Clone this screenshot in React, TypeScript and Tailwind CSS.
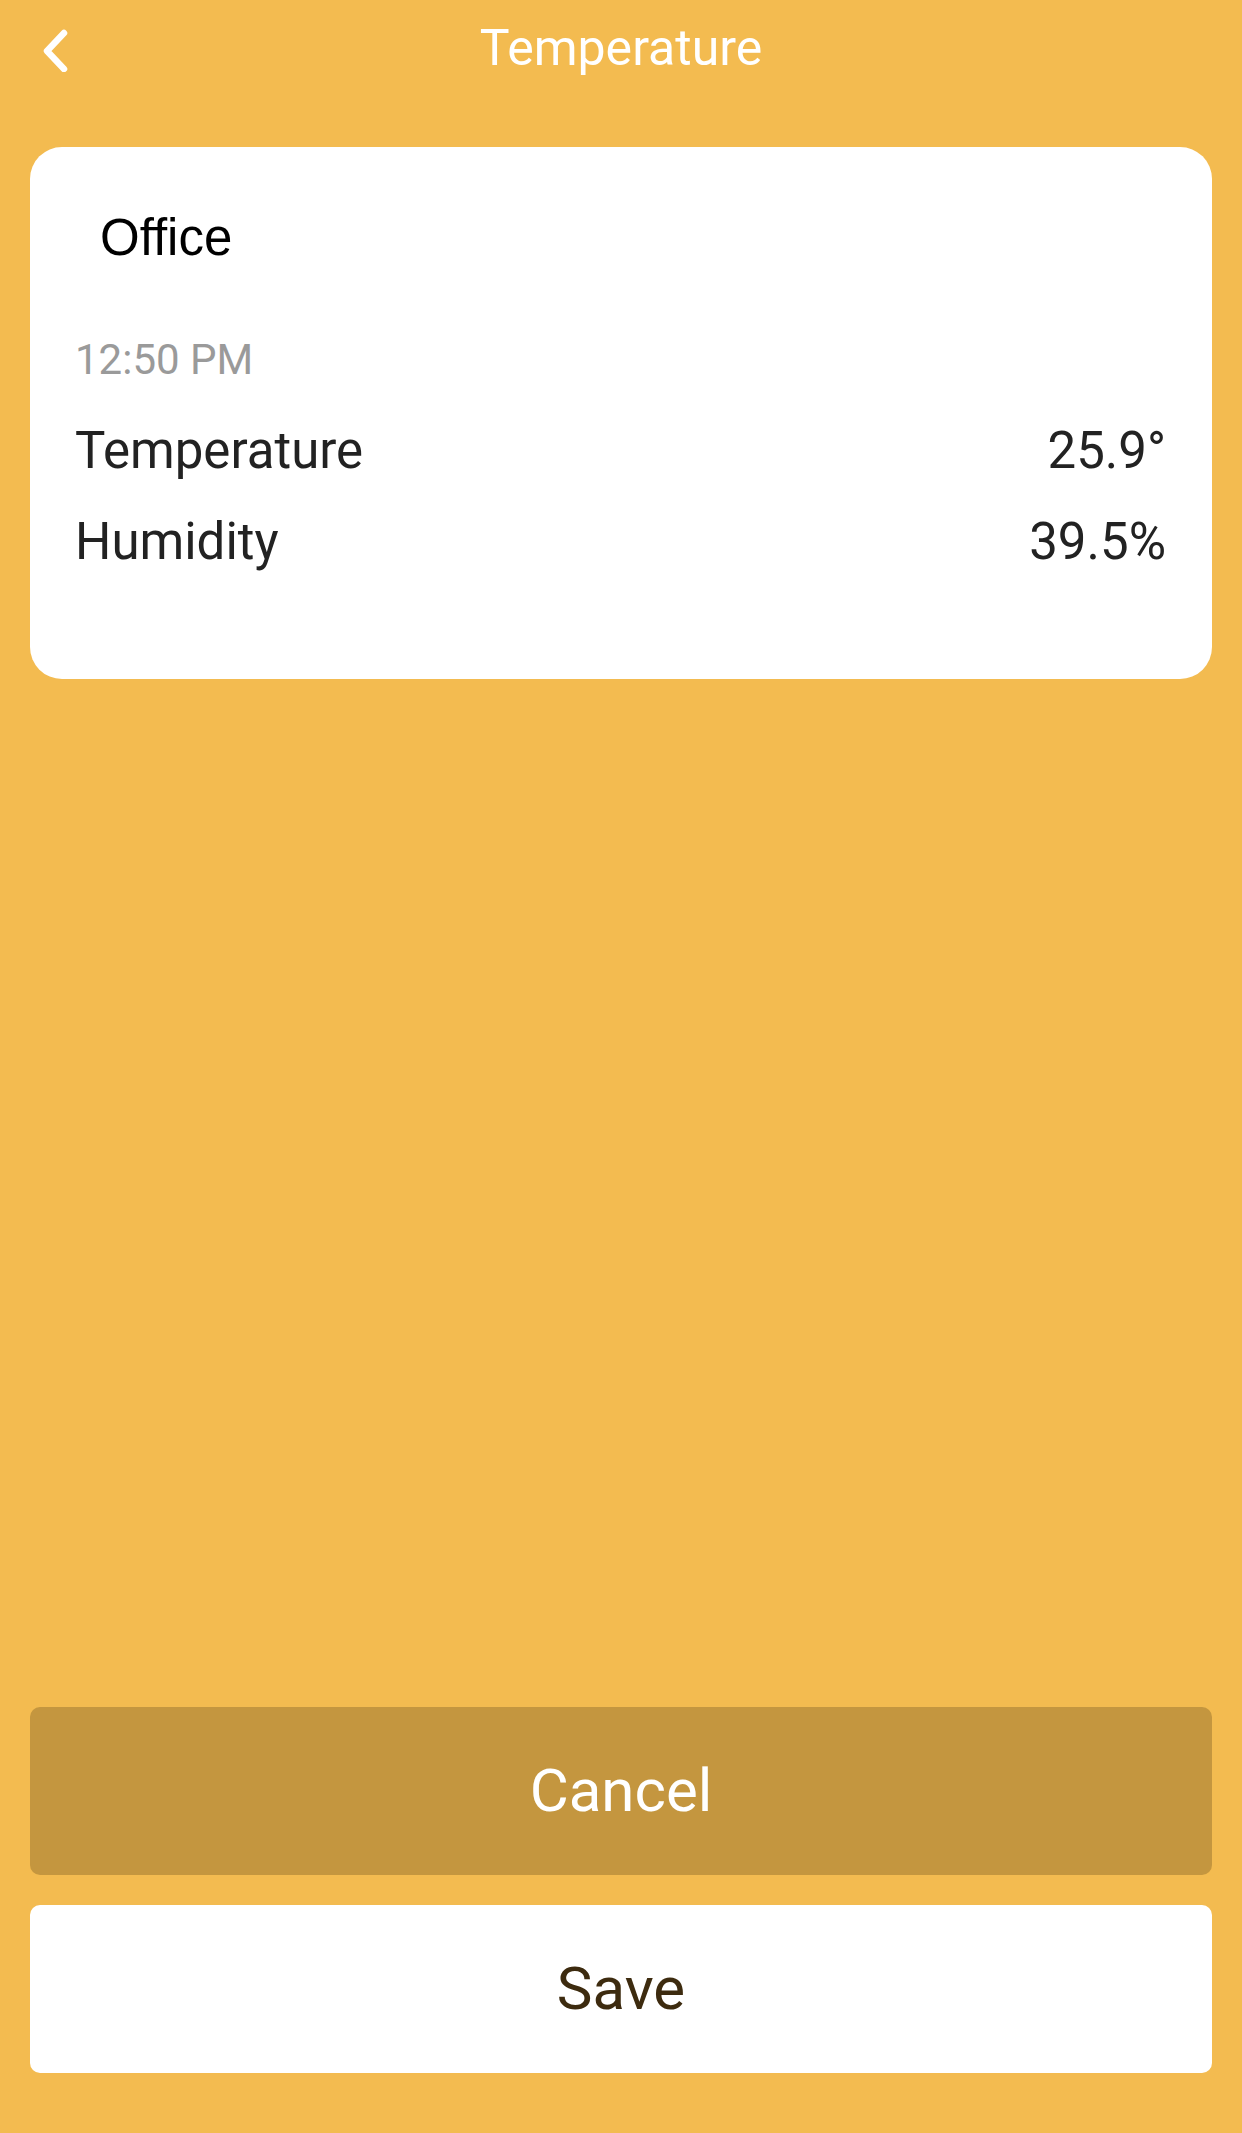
export default function App() {
  return (
    <main className="flex min-h-[2133px] w-full flex-col bg-[#f3bb50] px-[30px] pb-[60px] font-['Roboto',sans-serif]">
      <header className="grid h-24 grid-cols-[1fr_auto_1fr] items-center">
        <button className="ml-[9px] flex h-12 w-[30px] items-center justify-start">
          <svg width="30" height="48" viewBox="0 0 30 48" fill="none">
            <polyline
              points="25,9 8,27 25,45"
              stroke="#ffffff"
              strokeWidth="6.5"
              strokeLinecap="round"
              strokeLinejoin="round"
            />
          </svg>
        </button>
        <h1 className="text-[50px] font-normal leading-none text-white">Temperature</h1>
        <div />
      </header>

      <section className="mt-[51px] flex flex-col rounded-[32px] bg-white pb-[112px] pl-[45px] pr-[46px] pt-[65px]">
        <h2 className="ml-[25px] font-['Liberation_Sans',sans-serif] text-[51px] leading-none text-black">Office</h2>
        <p className="mt-[76px] text-[42px] leading-none text-[#9a9a9a]">12:50 PM</p>
        <div className="mt-[44px] flex flex-col gap-10 text-[51px] leading-none text-[#222222]">
          <div className="flex items-center justify-between">
            <span>Temperature</span>
            <span>25.9°</span>
          </div>
          <div className="flex items-center justify-between">
            <span>Humidity</span>
            <span>39.5%</span>
          </div>
        </div>
      </section>

      <div className="mt-auto flex flex-col gap-[30px]">
        <button className="flex h-[168px] items-center justify-center rounded-[10px] bg-[#c4963f] text-[60px] leading-none text-white">
          Cancel
        </button>
        <button className="flex h-[168px] items-center justify-center rounded-[10px] bg-white text-[60px] leading-none text-[#3d2b0f]">
          Save
        </button>
      </div>
    </main>
  );
}
